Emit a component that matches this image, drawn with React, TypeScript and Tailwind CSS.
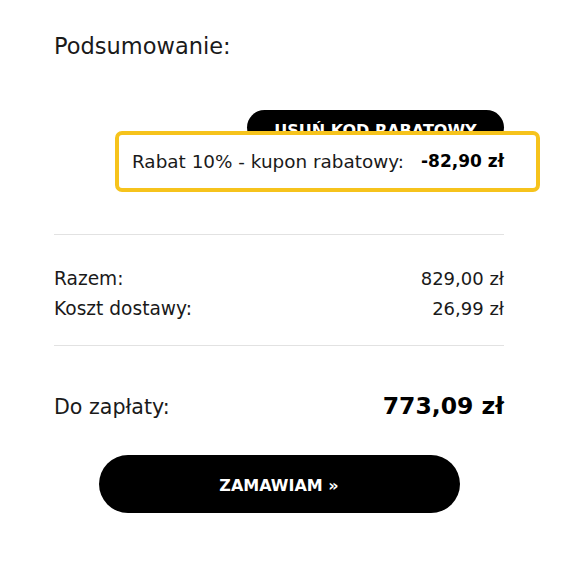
const font = { fontFamily: '"DejaVu Sans", "Liberation Sans", sans-serif' };

const rows = [
    { label: 'Razem:', value: '829,00 zł' },
    { label: 'Koszt dostawy:', value: '26,99 zł' },
];

const App = () => {
    return (
        <div className="min-h-screen bg-white pl-[54px] pt-[33px] text-[#1a1a1a]" style={font}>
            <div className="w-[450px] flex flex-col">
                {/* Header */}
                <h1 className="text-[22.5px] leading-[26px] font-normal">Podsumowanie:</h1>

                {/* Coupon */}
                <button className="mt-[51px] self-end w-[257px] h-[35px] pt-[6px] rounded-full bg-black text-white text-[16px] font-bold uppercase">
                    Usuń kod rabatowy
                </button>
                <div className="relative self-end mt-[-14px] mr-[-36px] w-[425px] h-[61px] rounded-[7px] border-[4px] border-[#f6c31c] bg-white flex items-center justify-between pl-[13px] pr-[32px]">
                    <span className="text-[18.4px]">Rabat 10% - kupon rabatowy:</span>
                    <span className="text-[17px] font-bold text-black">-82,90 zł</span>
                </div>

                <div className="mt-[42px] h-px bg-[#e2e2e2]" />

                {/* Totals */}
                <div className="mt-[29px]">
                    {rows.map((row) => (
                        <div key={row.label} className="flex justify-between items-center text-[18px] leading-[30px]">
                            <span className="text-[18.6px]">{row.label}</span>
                            <span>{row.value}</span>
                        </div>
                    ))}
                </div>

                <div className="mt-[21px] h-px bg-[#e2e2e2]" />

                <div className="mt-[45px] flex items-center justify-between h-[32px]">
                    <span className="text-[20.6px]">Do zapłaty:</span>
                    <span className="text-[23.5px] font-bold text-black">773,09 zł</span>
                </div>

                <button className="mt-[32px] mx-auto w-[361px] h-[58px] pt-[4px] rounded-full bg-black text-white text-[16px] font-bold">
                    ZAMAWIAM »
                </button>
            </div>
        </div>
    );
};

export default App;
